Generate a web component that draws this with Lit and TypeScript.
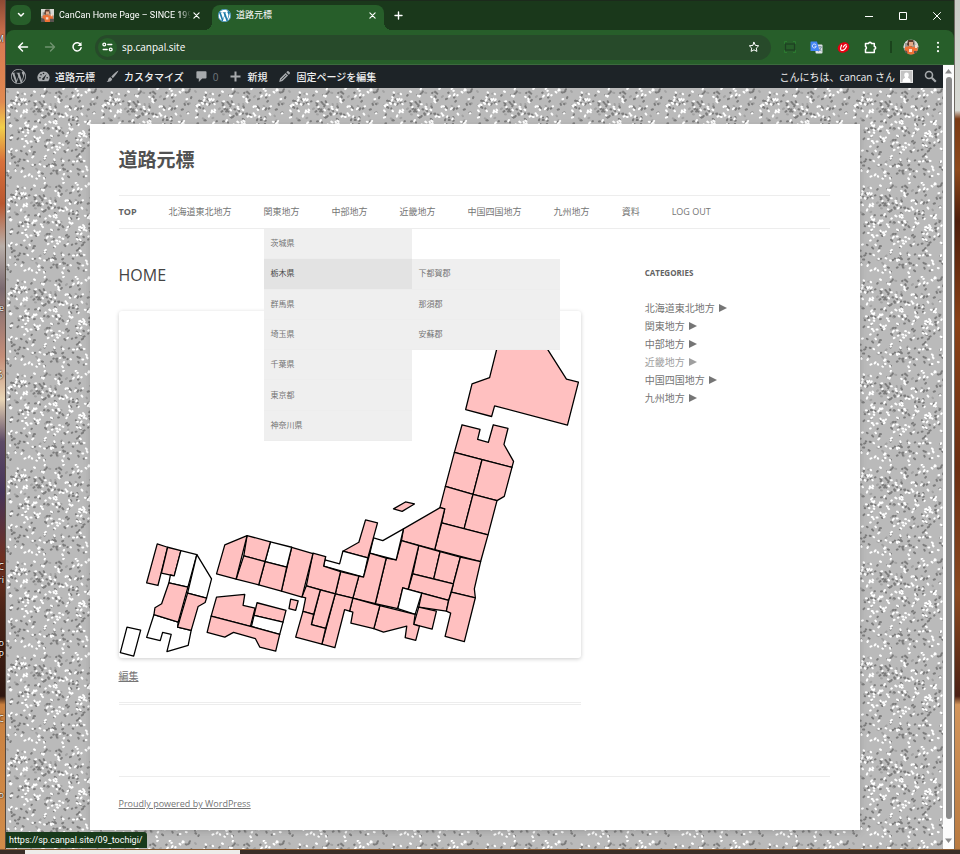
import { LitElement, html, css, svg } from "lit";
import { customElement } from "lit/decorators.js";
import { classMap } from "lit/directives/class-map.js";

const UI_FONT = css`"Open Sans", "Noto Sans CJK JP", sans-serif`;
const NARROW_FONT = css`Roboto, "Noto Sans CJK JP", sans-serif`;

const WP_PATH =
  "M21.469 6.825c.84 1.537 1.318 3.3 1.318 5.175 0 3.979-2.156 7.456-5.363 9.325l3.295-9.527c.615-1.54.82-2.771.82-3.864 0-.405-.026-.78-.07-1.11m-7.981.105c.647-.03 1.232-.105 1.232-.105.582-.075.514-.93-.067-.899 0 0-1.755.135-2.88.135-1.064 0-2.85-.15-2.85-.15-.585-.03-.661.855-.075.885 0 0 .54.061 1.125.09l1.68 4.605-2.37 7.08L5.354 6.9c.649-.03 1.234-.1 1.234-.1.585-.075.516-.93-.065-.896 0 0-1.746.138-2.874.138-.2 0-.438-.008-.69-.015C4.911 3.15 8.235 1.215 12 1.215c2.809 0 5.365 1.072 7.286 2.833-.046-.003-.091-.009-.141-.009-1.06 0-1.812.923-1.812 1.914 0 .89.513 1.643 1.06 2.531.411.72.89 1.643.89 2.977 0 .915-.354 1.994-.821 3.479l-1.075 3.585-3.9-11.61.001.014zM12 22.784c-1.059 0-2.081-.153-3.048-.437l3.237-9.406 3.315 9.087c.024.053.05.101.078.149-1.12.393-2.325.609-3.582.609M1.211 12c0-1.564.336-3.05.935-4.39L7.29 21.709C3.694 19.96 1.212 16.271 1.211 12M12 0C5.385 0 0 5.385 0 12s5.385 12 12 12 12-5.385 12-12S18.615 0 12 0";

/** Prefecture outlines; "open" ones have no page yet and stay white. */
const PREFECTURES: { points: string; open?: boolean }[] = [
  { points: "503,326 535,326 548.7,349 567.3,378.3 579.3,381.3 568.3,424.3 495.3,405 492.3,415.7 466.3,408.7 472.7,383 490.3,376.7" },
  { points: "462.7,424 480.7,428.7 478.3,438.7 489,441.7 494,424 508.7,427.7 504.7,443.7 514.3,460.7 512.7,466.7 455,451.7" },
  { points: "455,451.7 482.7,459 473.7,493.7 446,485.7" },
  { points: "482.7,459 512.7,466.7 505,495.7 497.7,500 473.7,493.7" },
  { points: "446,485.7 473.7,493.7 464.7,528.3 442.3,522.3 445.3,508.3 440.5,507" },
  { points: "473.7,493.7 497.7,500 488.7,534.3 464.7,528.3" },
  { points: "442.3,522.3 488.7,534.3 481.3,561 435.3,549" },
  { points: "404,528.3 440.7,507 445.3,508.3 435.3,549 402,540" },
  { points: "394,508.3 406,501.3 415,503.3 402.7,510.7" },
  { points: "419.3,545 440.7,551 434.3,578.3 413.3,573.3" },
  { points: "440.7,551 461,556.7 454,583.3 434.3,578.3" },
  { points: "461,556.7 481.3,561 475,588.3 476,597.3 452,591.7 454,583.3" },
  { points: "413.3,573.3 454,583.3 449.3,600 408.7,589" },
  { points: "422.3,592.7 449.3,600 447,610.7 419.3,606.7" },
  { points: "419.3,606.7 437,610.7 432.7,628.7 414.3,624" },
  { points: "452,591.7 476,597.3 465,641.3 445.7,636 451.3,612.7 447,610.7 449.3,600" },
  { points: "386.7,557.7 396.7,559.3 402,540 419.3,545 408.7,589 403.3,587.3 398.3,608.3 375.7,603.3" },
  { points: "403.3,587.3 422.3,592.7 415.7,614 398.3,608.3", open: true },
  { points: "380.3,605.3 415.7,614 414.3,624 420,625.7 416.3,640 405.7,637.3 407.3,625.7 384,631.7 374.3,628.3" },
  { points: "374,537.3 383.3,540 404,528.3 396.7,559.3 370.3,552.7", open: true },
  { points: "366,519.3 378,522.3 368.3,557.3 343.3,550.7 359.3,541.7" },
  { points: "326,556 325.3,559.3 340,563.3 343.3,550.7 368.3,557.3 364,576.7 324,565.7", open: true },
  { points: "370.3,552.7 386.7,557.7 375.7,603.3 353.3,597.7 359.3,575.7 364,576.7" },
  { points: "353.3,597.7 380.3,605.3 374.3,628.3 351.3,622.7 353.3,611.7 350,610.7" },
  { points: "341,571 359.3,575.7 353.3,597.7 335.7,593.3" },
  { points: "313.3,552.7 326,556 324,565.7 341,571 335.7,593.3 306.7,585.3" },
  { points: "335.7,593.3 353.3,597.7 350,610.7 345,609.3 335.3,647.3 322.3,643.7" },
  { points: "320.7,589.3 335.7,593.3 326,628 311.7,624.3" },
  { points: "306.7,585.3 320.7,589.3 314,614 303.3,611 306,597.3 302.3,596.3" },
  { points: "303.3,611 314,614 311.7,624.3 326,628 322.3,643.7 296,636.7" },
  { points: "291,598.7 298.5,600.5 296,610 289.3,608.3" },
  { points: "292,546.7 313.3,553 302.3,596.7 281.7,590.7" },
  { points: "270.7,541.3 292,546.7 287,566.7 265.3,561", open: true },
  { points: "265.3,561 287,566.7 281.7,590.7 259,584.3" },
  { points: "247.3,535 270.7,541.3 265.3,561 244,555.3" },
  { points: "244,555.3 265.3,561 259,584.3 236.3,578.7" },
  { points: "225,544.3 247.3,535 236.3,578.7 216.7,573.3" },
  { points: "216.7,596.7 245,594 243.3,605 255.3,607.7 250.7,626 211.3,615.7" },
  { points: "257.3,602.3 286.3,610 283.3,621.7 254.3,615" },
  { points: "254.3,615 283.3,621.7 280,634 251.7,626", open: true },
  { points: "211.3,615.7 250.7,626 280,634 276,650.7 260,646.7 255.7,638.3 233.7,632 225,636.7 207.3,632" },
  { points: "157.3,543.3 167.7,546.7 158,585 146.7,582.3" },
  { points: "167.7,546.7 181,550 174.3,575.3 161.5,572.7" },
  { points: "181,550 197,554 188,586.7 169,582.3 170.5,574.5 174.3,575.3", open: true },
  { points: "197,554 211.7,578.3 206.7,597.7 187.7,592.7", open: true },
  { points: "154,614.3 178.3,621.7 177.7,626.7 191.3,630 188.3,645 167,651.3 171.3,634 162.7,632 160.3,640.3 146.7,637", open: true },
  { points: "169,582.3 188,586.7 178.3,621.7 154,614.3 155,607.3 161.7,603.3" },
  { points: "187.7,592.7 206.7,597.7 205.3,602 198.3,606 191.3,630 177.7,626.7" },
  { points: "127,626.7 140.7,629.7 133.7,655.7 120.3,652.3", open: true },
];

const NAV = ["TOP", "北海道東北地方", "関東地方", "中部地方", "近畿地方", "中国四国地方", "九州地方", "資料", "LOG OUT"];
const KANTO = ["茨城県", "栃木県", "群馬県", "埼玉県", "千葉県", "東京都", "神奈川県"];
const TOCHIGI = ["下都賀郡", "那須郡", "安蘇郡"];
const CATEGORIES = ["北海道東北地方", "関東地方", "中部地方", "近畿地方", "中国四国地方", "九州地方"];

/** Captions of desktop icons, mostly hidden behind the window. */
const CAPTIONS: [number, string][] = [
  [33, "M"], [302, "e"], [369, "る"], [561, "C"], [574, "ri"], [637, "Co"], [649, "P"], [713, "C"], [789, "o"],
];

/** Scatters flecks over one tile; the fixed seed keeps the texture stable. */
const TILE = 94;
function flecks(count: number, seed: number): string {
  let s = seed;
  const next = () => (s = (s * 16807) % 2147483647) / 2147483647;
  let d = "";
  for (let i = 0; i < count; i++) {
    const x = 1 + next() * (TILE - 4);
    const y = 1 + next() * (TILE - 4);
    const lean = next() > 0.5 ? 1 : -1;
    d += `M${x.toFixed(1)} ${y.toFixed(1)}l${(0.3 + next() * 0.9).toFixed(1)} ${(lean * next() * 1.2).toFixed(1)}`;
  }
  return d;
}
const DARK = flecks(170, 4711);
const MID = flecks(40, 99);
const LIGHT = flecks(180, 1234);

const photo = svg`
  <rect width="16" height="16" fill="#9a9a94"/>
  <path d="M0 0h6v4H2v5H0zM11 0h5v8h-3z" fill="#d8d8d2"/>
  <path d="M5 1h5l1 4-3 3-4-2z" fill="#5b3a2c"/>
  <path d="M6 3h4v4H6z" fill="#e3a988"/>
  <path d="M2 8l5-1 3 1 4-1 1 6-3 3H4l-2-3z" fill="#ee7136"/>
  <path d="M0 11l4 1 1 4H0zM11 12h5v4h-5z" fill="#5a5350"/>
  <path d="M6 10h3v3H6zM12 6h2v3h-2z" fill="#f7dccb"/>`;

@customElement("app-root")
export class AppRoot extends LitElement {
  static styles = css`
    :host { display: block; font-family: ${UI_FONT}; font-size: 10px; }
    * { box-sizing: border-box; }
    button { border: 0; padding: 0; background: none; color: inherit; font: inherit; display: flex; align-items: center; justify-content: center; }
    ul { list-style: none; margin: 0; padding: 0; }
    h1, h2, h3, p { margin: 0; }
    a { color: inherit; text-decoration: none; }
    svg { display: block; flex: none; }
    .line { fill: none; stroke: currentColor; stroke-linecap: round; stroke-linejoin: round; }

    .desktop { min-height: 100vh; display: grid; grid-template: 1fr 5px / 6px minmax(0, 1fr) 6px; }
    .left, .right { position: relative; overflow: hidden; }
    .left {
      border-right: 1px solid #55493f;
      background: linear-gradient(#8d4a34, #d97a52 5%, #e08a50 12%, #f2cf4a 15%, #d8703a 19%, #b9572f 24%, #b8aea8 29%, #7b6a70 34%, #c48d78 42%, #e9d5b5 47%, #5d4a66 52%, #463358 58%, #70301f 66%, #4a2417 72%, #2e160f 82%, #c9803f 83%, #d18c4a 100%);
    }
    .right {
      border-left: 1px solid #6f6a64;
      background: linear-gradient(#c9cbc6, #d8dad4 13%, #7a3a14 14%, #8e4a1c 20%, #4d1d0b 26%, #8a4217 38%, #6c2f12 55%, #8b4a20 70%, #4b2014 82%, #d3965c 83%, #b97a40 100%);
    }
    .caption { position: absolute; right: 1px; line-height: 12px; color: #fff; text-shadow: 0 0 2px #000, 0 0 1px #000; white-space: nowrap; font-size: 9px; }
    .taskbar { grid-column: 1 / -1; background: #3a2d27; border-top: 1px solid #8a5a30; padding-left: 25px; }
    .taskwin { width: 23%; height: 4px; background: #eeecea; }

    .window { display: flex; flex-direction: column; color: #fff; background: #1a381b; min-width: 0; }

    .tabs { height: 30px; display: flex; align-items: flex-end; padding-left: 4px; border-top: 1px solid #1c2a1c; }
    .picker { width: 21px; height: 20px; margin-bottom: 5px; border-radius: 7px; background: #275e2a; }
    .tab { position: relative; display: flex; align-items: center; gap: 5px; height: 25px; padding: 0 6px 5px; }
    .tab.idle { width: 171px; margin-left: 4px; }
    .tab.active { width: 172px; margin-left: 6px; background: #275e2a; border-radius: 8px 8px 0 0; }
    .tab.active::before, .tab.active::after { content: ""; position: absolute; bottom: 0; width: 8px; height: 8px; }
    .tab.active::before { left: -8px; background: radial-gradient(circle at 0 0, transparent 8px, #275e2a 8px); }
    .tab.active::after { right: -8px; background: radial-gradient(circle at 100% 0, transparent 8px, #275e2a 8px); }
    .tabname { flex: 1; min-width: 0; overflow: hidden; white-space: nowrap; font: 9px/16px ${UI_FONT}; justify-content: flex-start; }
    .idle .tabname { margin-right: -5px; font: 9px/16px ${NARROW_FONT}; -webkit-mask-image: linear-gradient(90deg, #000 92%, transparent); }
    .close { width: 12px; height: 16px; }
    .idle .close { width: 10px; margin-right: -1px; }
    .add { width: 28px; height: 22px; margin-bottom: 4px; }
    .controls { margin-left: auto; display: flex; }
    .controls button { width: 34px; height: 29px; }

    .toolbar { height: 35px; display: flex; align-items: center; background: #275e2a; border-radius: 8px 8px 0 0; border-bottom: 1px solid #3b6b3d; padding: 0 3px; }
    .tool { width: 27px; height: 26px; flex: none; }
    .dim { color: #6f936f; }
    .omnibox { flex: 1; height: 25px; margin: 0 5px 0 5px; padding: 0 11px 0 3px; display: flex; align-items: center; gap: 5px; border-radius: 13px; background: #274a2a; }
    .info { width: 19px; height: 19px; border-radius: 10px; background: #275e2a; flex: none; }
    .url { flex: 1; min-width: 0; border: 0; padding: 0; background: none; color: #fff; font: 10px/16px ${UI_FONT}; outline: 0; }
    .bar { width: 2px; height: 12px; margin: 0 5px 0 6px; background: #1a431c; }

    .viewport { flex: 1; display: flex; min-height: 0; position: relative; background: #bababa; }
    .document { flex: 1; min-width: 0; display: flex; flex-direction: column; position: relative; }
    .scroll { width: 11px; background: #fcfcfc; display: flex; flex-direction: column; align-items: center; justify-content: space-between; padding: 3px 0 5px; gap: 3px; }
    .thumb { flex: 1; width: 6px; margin-bottom: 16px; border-radius: 3px; background: #8b8b8b; }

    .admin { height: 23px; background: #1d2327; display: flex; align-items: center; gap: 11px; padding: 0 6px 0 5px; color: #f0f0f1; position: relative; font-weight: 500; white-space: nowrap; }
    .item { display: flex; align-items: center; gap: 5px; line-height: 16px; }
    .item svg { color: #a7aaad; }
    .count { color: #72777c; }
    .hello { margin-left: auto; font-weight: 400; }

    .wall { position: relative; flex: 1; padding: 36px 20px 19px; }
    .texture { position: absolute; inset: 0; width: 100%; height: 100%; }
    .page { position: relative; max-width: 770px; margin: 0 auto; padding: 23px 30px 18px 29px; background: #fff; color: #757575; box-shadow: 0 2px 6px rgba(100, 100, 100, 0.3); }
    .site { font-size: 19px; line-height: 26px; color: #515151; }
    .nav { margin-top: 22px; border: solid #ededed; border-width: 1px 0; }
    .menu { display: flex; flex-wrap: wrap; gap: 0 32px; font-size: 9px; line-height: 32px; }
    .entry { position: relative; white-space: nowrap; }
    .current { font-weight: 700; color: #636363; }
    .sub { position: absolute; z-index: 2; top: 33px; left: 0; width: 148px; height: 212px; display: grid; grid-auto-rows: 1fr; font-size: 8px; line-height: 12px; background: #efefef; }
    .cell { position: relative; display: flex; align-items: center; padding: 0 7px 1px; border-bottom: 1px solid #ededed; }
    .hot { background: #e3e3e3; color: #4a4a4a; }
    .fly { top: 0; left: 100%; height: 91px; color: #757575; }

    .columns { display: grid; grid-template-columns: 65% 26%; justify-content: space-between; padding-top: 34px; }
    .title { font-size: 16px; line-height: 24px; font-weight: 400; color: #444; }
    .map { margin-top: 24px; width: 100%; height: auto; border-radius: 3px; box-shadow: 0 1px 4px rgba(0, 0, 0, 0.2); }
    .pref { fill: #ffc0c0; stroke: #000; stroke-width: 1.3; stroke-linejoin: round; }
    .pref.open { fill: #fff; }
    .edit { margin-top: 8px; line-height: 20px; padding-bottom: 16px; border-bottom: 3px double #ededed; }
    .edit a, .foot a { text-decoration: underline; }
    .heading { font-size: 8px; line-height: 20px; color: #636363; }
    .cats { margin-top: 16px; line-height: 18px; }
    .cats .faded { color: #9f9f9f; }
    .cats a { display: inline-flex; align-items: center; gap: 4px; }
    .foot { margin-top: 71px; border-top: 1px solid #ededed; padding-top: 19px; font-size: 9px; line-height: 16px; }

    .status { position: absolute; left: 0; bottom: 1px; height: 16px; padding: 0 4px 0 3px; border-radius: 0 3px 0 0; background: #183a1b; font: 9px/16px ${NARROW_FONT}; white-space: nowrap; }
  `;

  private wp(size: number) {
    return html`<svg width=${size} height=${size} viewBox="0 0 24 24"><path d=${WP_PATH} fill="currentColor"/></svg>`;
  }

  private cross() {
    return html`<svg width="7" height="7" viewBox="0 0 8 8"><path class="line" stroke-width="1.300" d="M1 1l6 6M7 1L1 7"/></svg>`;
  }

  private browserChrome() {
    return html`
      <div class="tabs">
        <button class="picker" aria-label="タブを検索"><svg width="8" height="6" viewBox="0 0 8 6"><path class="line" stroke-width="1.5" d="M1.5 1.5L4 4l2.500-2.500"/></svg></button>
        <div class="tab idle">
          <svg width="13" height="13" viewBox="0 0 16 16">${photo}</svg>
          <button class="tabname">CanCan Home Page – SINCE 1996</button>
          <button class="close" aria-label="閉じる">${this.cross()}</button>
        </div>
        <div class="tab active">
          <svg width="13" height="13" viewBox="0 0 24 24"><circle cx="12" cy="12" r="12" fill="#fff"/><path d=${WP_PATH} fill="#1c7aa8"/></svg>
          <button class="tabname">道路元標</button>
          <button class="close" aria-label="閉じる">${this.cross()}</button>
        </div>
        <button class="add" aria-label="新しいタブ"><svg width="9" height="9" viewBox="0 0 9 9"><path class="line" stroke-width="1.4" d="M4.500 1v7M1 4.500h7"/></svg></button>
        <div class="controls">
          <button aria-label="最小化"><svg width="8" height="8" viewBox="0 0 8 8"><path d="M0 4.500h8" stroke="currentColor"/></svg></button>
          <button aria-label="最大化"><svg width="8" height="8" viewBox="0 0 8 8"><path d="M.5.5h7v7h-7z" fill="none" stroke="currentColor"/></svg></button>
          <button aria-label="ウィンドウを閉じる"><svg width="8" height="8" viewBox="0 0 8 8"><path class="line" d="M.5.5l7 7M7.500.5l-7 7"/></svg></button>
        </div>
      </div>
      <div class="toolbar">
        <button class="tool" aria-label="戻る"><svg width="12" height="12" viewBox="0 0 12 12"><path class="line" stroke-width="1.5" d="M10.500 6h-9M5.500 2l-4 4 4 4"/></svg></button>
        <button class="tool dim" aria-label="進む"><svg width="12" height="12" viewBox="0 0 12 12"><path class="line" stroke-width="1.4" d="M1.500 6h9M6.500 2l4 4-4 4"/></svg></button>
        <button class="tool" aria-label="再読み込み"><svg width="12" height="12" viewBox="0 0 12 12"><path class="line" stroke-width="1.5" d="M9.800 4A4.100 4.100 0 1 0 10.100 6.800"/><path d="M10.500 1v4h-4z" fill="currentColor"/></svg></button>
        <div class="omnibox">
          <button class="info" aria-label="サイト情報"><svg width="11" height="10" viewBox="0 0 11 10"><g class="line" stroke-width="1.3"><circle cx="2.300" cy="2.500" r="1.400"/><path d="M5.800 2.500h4M1.200 7.500h4"/><circle cx="8.700" cy="7.500" r="1.400"/></g></svg></button>
          <input class="url" aria-label="アドレス" .value=${"sp.canpal.site"} />
          <button aria-label="ブックマーク"><svg width="12" height="12" viewBox="0 0 12 12"><path class="line" d="M6 1.300l1.400 3.100 3.300.4-2.400 2.300.6 3.300L6 8.800l-2.900 1.600.6-3.300L1.300 4.800l3.300-.4z"/></svg></button>
        </div>
        <button class="tool" aria-label="スクリーンショット"><svg width="12" height="12" viewBox="0 0 12 12"><path d="M.5 3V.5H3M9 .5h2.500V3M11.500 9v2.500H9M3 11.500H.5V9" fill="none" stroke="#2b7a30"/><rect x="1.500" y="3" width="9" height="6" fill="#275e2a" stroke="#1d3f22" stroke-width="1.200"/></svg></button>
        <button class="tool" aria-label="翻訳"><svg width="13" height="13" viewBox="0 0 13 13"><rect x="5.500" y="3.500" width="7" height="9" rx="1" fill="#dfe3e8"/><path d="M8 6h4M10 5v1M8.500 10.500L11.300 6.500M9 7.500l2.500 2.800" fill="none" stroke="#607d8b" stroke-width=".8"/><path d="M.5 1q0-.5.5-.5h6L9.500 10H1q-.5 0-.5-.5z" fill="#4285f4"/><path d="M6.300 5.300H4.600M6.200 4.200a2 2 0 1 0 .1 1.300" fill="none" stroke="#dbe7ff" stroke-width="1"/></svg></button>
        <button class="tool" aria-label="トレンドマイクロ"><svg width="13" height="13" viewBox="0 0 13 13"><ellipse cx="6.500" cy="6.500" rx="6" ry="5" fill="#e60012" transform="rotate(-30 6.500 6.500)"/><path d="M4.600 4.200Q2.600 8.600 4.600 9.300 8 9.600 9.600 5M6.300 6Q7.500 3.600 9 3.600" fill="none" stroke="#fff" stroke-width="1.200" stroke-linecap="round"/></svg></button>
        <button class="tool" aria-label="拡張機能"><svg width="13" height="13" viewBox="0 0 13 13"><path class="line" stroke-width="1.500" d="M1.500 2.500h3.200a1.300 1.300 0 0 1 2.600 0h3v3a1.400 1.400 0 0 1 0 2.800v3.200H1.500V8.300a1.500 1.500 0 0 0 0-2.800z"/></svg></button>
        <span class="bar"></span>
        <button class="tool" aria-label="プロフィール"><svg width="16" height="16" viewBox="0 0 16 16"><clipPath id="round"><circle cx="8" cy="8" r="7.500"/></clipPath><g clip-path="url(#round)">${photo}</g></svg></button>
        <button class="tool" aria-label="メニュー"><svg width="4" height="12" viewBox="0 0 4 12"><g fill="currentColor"><circle cx="2" cy="1.800" r="1.100"/><circle cx="2" cy="6" r="1.100"/><circle cx="2" cy="10.200" r="1.100"/></g></svg></button>
      </div>`;
  }

  private adminBar() {
    return html`
      <nav class="admin" aria-label="ツールバー">
        <a class="item" href="#" aria-label="WordPress">${this.wp(15)}</a>
        <a class="item" href="#">
          <svg width="13" height="13" viewBox="0 0 13 13"><path d="M6.500 1.500A6 6 0 0 0 1.700 11.200h9.600A6 6 0 0 0 6.500 1.500z" fill="currentColor"/><g fill="#1d2327"><circle cx="3" cy="7.800" r=".8"/><circle cx="4" cy="4.800" r=".8"/><circle cx="6.500" cy="3.500" r=".8"/><circle cx="10.200" cy="7.800" r=".8"/><path d="M9.600 4L7.600 8.600a1.200 1.200 0 1 1-1.500-.9z"/></g></svg>道路元標</a>
        <a class="item" href="#">
          <svg width="13" height="13" viewBox="0 0 13 13"><path d="M12.500.6Q10 1.500 5.300 6.600l1.500 1.600Q11.500 3.500 12.500.6zM4.500 7.300l1.700 1.700q-.4 3-5.700 3 1.600-.8 1.700-2.500.3-2 2.300-2.200z" fill="currentColor"/></svg>カスタマイズ</a>
        <a class="item" href="#" aria-label="コメント 0 件">
          <svg width="13" height="13" viewBox="0 0 13 13"><path d="M2.200 1.200h8.500q.8 0 .8.800v5.800q0 .8-.8.800H7.200L3.800 12V8.600H2.200q-.8 0-.8-.8V2q0-.8.800-.8z" fill="currentColor"/></svg><span class="count">0</span></a>
        <a class="item" href="#">
          <svg width="13" height="13" viewBox="0 0 13 13"><path d="M6.500 1.500v10M1.500 6.500h10" stroke="currentColor" stroke-width="2"/></svg>新規</a>
        <a class="item" href="#">
          <svg width="13" height="13" viewBox="0 0 13 13"><path d="M8.300 2.300l1-1q.6-.5 1.200 0l1.300 1.300q.5.600 0 1.200l-1 1zM7.600 3l2.500 2.500-5.600 5.600-3.300.8.800-3.300z" fill="currentColor"/><path d="M3.300 9.800l5-5" stroke="#1d2327" stroke-width=".8"/></svg>固定ページを編集</a>
        <a class="item hello" href="#">こんにちは、cancan さん
          <svg width="13" height="13" viewBox="0 0 13 13"><path d="M0 0h13v13H0z" fill="#e4e4e4"/><path d="M1 1h11v11H1z" fill="#c3c3c3"/><path d="M6.500 2.500q2.300 0 2.300 2.400 0 1.400-.8 2.300 0 1 1.200 1.400 1.300.5 1.300 3.400h-8q0-2.900 1.300-3.400 1.200-.4 1.200-1.400-.8-.9-.8-2.300 0-2.400 2.300-2.400z" fill="#fff"/></svg></a>
        <a class="item" href="#" aria-label="検索">
          <svg width="13" height="13" viewBox="0 0 13 13"><circle cx="5" cy="5" r="3.500" fill="none" stroke="currentColor" stroke-width="1.600"/><path d="M7.800 7.800l4 4" stroke="currentColor" stroke-width="2.200"/></svg></a>
      </nav>`;
  }

  private submenu() {
    return html`
      <ul class="sub">
        ${KANTO.map((name) => html`
          <li class=${classMap({ cell: true, hot: name === "栃木県" })}>
            <a href="#">${name}</a>
            ${name === "栃木県"
              ? html`<ul class="sub fly">${TOCHIGI.map((d) => html`<li class="cell"><a href="#">${d}</a></li>`)}</ul>`
              : ""}
          </li>`)}
      </ul>`;
  }

  private page() {
    return html`
      <div class="page">
        <h1 class="site"><a href="#">道路元標</a></h1>
        <nav class="nav" aria-label="メインメニュー">
          <ul class="menu">
            ${NAV.map((name) => html`
              <li class="entry"><a class=${classMap({ current: name === "TOP" })} href="#">${name}</a>${name === "関東地方" ? this.submenu() : ""}</li>`)}
          </ul>
        </nav>
        <div class="columns">
          <main>
            <h2 class="title">HOME</h2>
            <svg class="map" viewBox="119 310 463 348" role="img" aria-label="日本地図">
              ${PREFECTURES.map((p) => svg`<polygon class=${classMap({ pref: true, open: !!p.open })} points=${p.points}/>`)}
            </svg>
            <p class="edit"><a href="#">編集</a></p>
          </main>
          <aside>
            <h3 class="heading">CATEGORIES</h3>
            <ul class="cats">
              ${CATEGORIES.map((name) => html`
                <li class=${classMap({ faded: name === "近畿地方" })}><a href="#">${name}<svg width="8" height="8" viewBox="0 0 8 8"><path d="M0 0l8 4-8 4z" fill="currentColor"/></svg></a></li>`)}
            </ul>
          </aside>
        </div>
        <footer class="foot"><a href="#">Proudly powered by WordPress</a></footer>
      </div>`;
  }

  render() {
    return html`
      <div class="desktop">
        <div class="left">
          ${CAPTIONS.map(([top, text]) => html`<span class="caption" style="top:${top}px">${text}</span>`)}
        </div>
        <div class="window">
          ${this.browserChrome()}
          <div class="viewport">
            <div class="document">
              ${this.adminBar()}
              <div class="wall">
                <svg class="texture" aria-hidden="true">
                  <pattern id="stone" width=${TILE} height=${TILE} patternUnits="userSpaceOnUse">
                    <rect width=${TILE} height=${TILE} fill="#bababa"/>
                    <g fill="none" stroke-linecap="round" stroke-width="2">
                      <path d=${MID} stroke="#a2a2a2"/><path d=${DARK} stroke="#7c7c7c"/><path d=${LIGHT} stroke="#fff"/>
                    </g>
                  </pattern>
                  <rect width="100%" height="100%" fill="url(#stone)"/>
                </svg>
                ${this.page()}
              </div>
            </div>
            <div class="scroll">
              <svg width="7" height="6" viewBox="0 0 7 6"><path d="M3.500 1L7 5.500H0z" fill="#8b8b8b"/></svg>
              <div class="thumb"></div>
              <svg width="7" height="6" viewBox="0 0 7 6"><path d="M3.500 5L7 .5H0z" fill="#8b8b8b"/></svg>
            </div>
            <div class="status">https://sp.canpal.site/09_tochigi/</div>
          </div>
        </div>
        <div class="right"></div>
        <div class="taskbar"><div class="taskwin"></div></div>
      </div>`;
  }
}
